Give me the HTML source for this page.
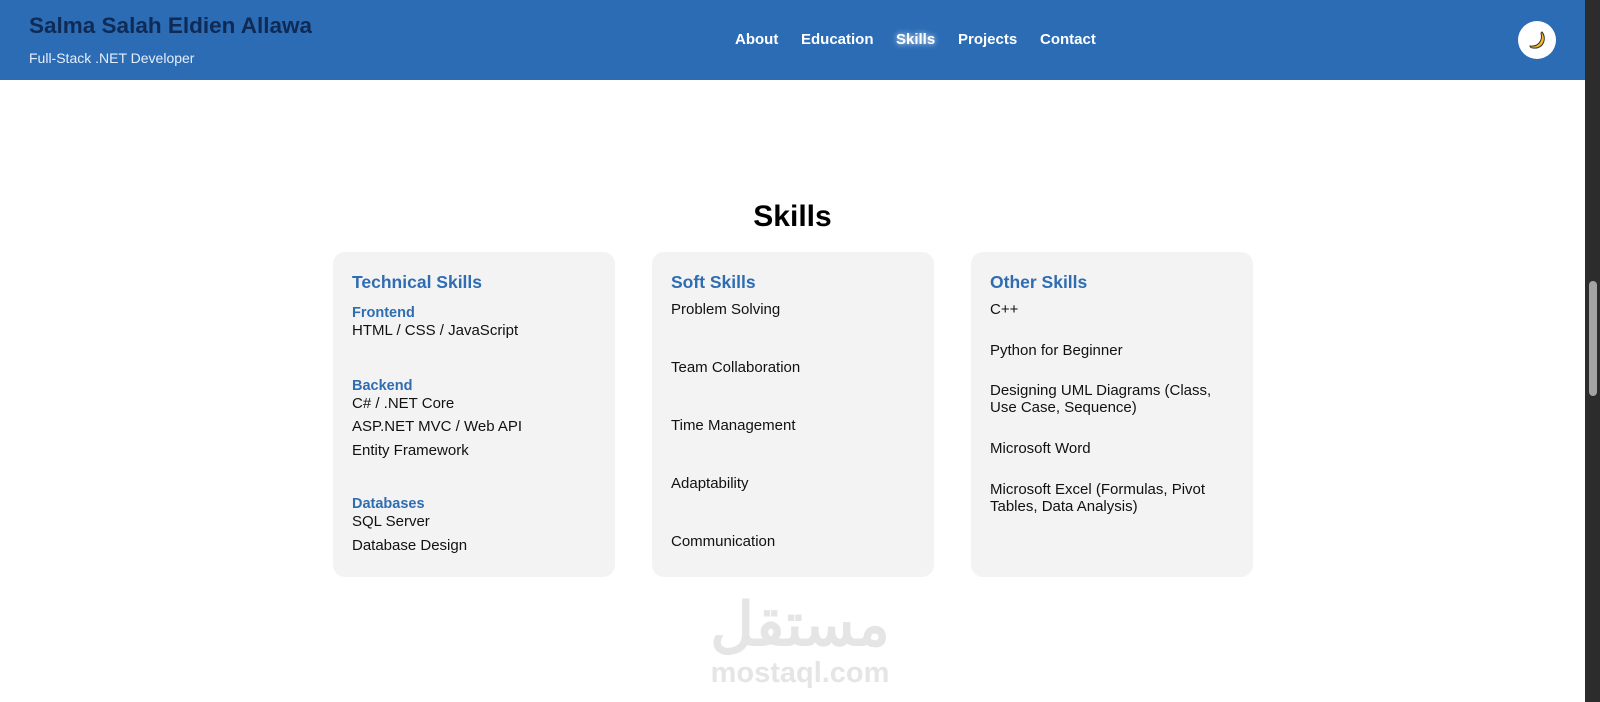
<!DOCTYPE html>
<html><head><meta charset="utf-8"><style>
*{margin:0;padding:0;box-sizing:border-box}
body{width:1600px;height:702px;overflow:hidden;background:#fff;font-family:"Liberation Sans",Arial,sans-serif;position:relative}
.hdr{position:absolute;left:0;top:0;width:1585px;height:80px;background:#2b6cb5}
.abs{position:absolute;white-space:nowrap}
.name{left:29px;top:13px;font-size:22.5px;font-weight:bold;color:#0f2a55}
.sub{left:29px;top:50px;font-size:14px;color:#e6eefa}
.nav{top:31px;font-size:15px;font-weight:bold;color:#fff}
.moon{left:1518px;top:21px;width:38px;height:38px;border-radius:50%;background:#fff}
.card{position:absolute;top:252px;width:282px;height:325px;background:#f3f3f3;border-radius:12px}
.t{font-size:17.5px;font-weight:bold;color:#2f6db3}
.h{font-size:14.5px;font-weight:bold;color:#2f6db3}
.i{font-size:15px;color:#111;line-height:17px}
.sb{position:absolute;left:1585px;top:0;width:15px;height:702px;background:#2c2c2c}
.th{position:absolute;left:1589px;top:281px;width:8px;height:115px;border-radius:4px;background:#a3a3a3}
</style></head><body>
<div class="hdr"></div>
<div class="abs name">Salma Salah Eldien Allawa</div>
<div class="abs sub">Full-Stack .NET Developer</div>
<div class="abs nav" style="left:735px">About</div>
<div class="abs nav" style="left:801px">Education</div>
<div class="abs nav" style="left:896px;text-shadow:0 0 6px rgba(255,255,255,.9)">Skills</div>
<div class="abs nav" style="left:958px">Projects</div>
<div class="abs nav" style="left:1040px">Contact</div>
<div class="abs moon"><svg width="38" height="38" viewBox="0 0 38 38"><path d="M24 11 C29 17 26 28 15 27 C13 27 12 26 12 25 C20 26 25 20 23 12 Z" fill="#f4b92d" stroke="#333" stroke-width="1"/></svg></div>
<div class="abs" style="left:0;width:1585px;text-align:center;top:200px;font-size:30px;font-weight:bold;color:#000">Skills</div>

<div class="card" style="left:333px"></div>
<div class="card" style="left:652px"></div>
<div class="card" style="left:971px"></div>

<div class="abs t" style="left:352px;top:272px">Technical Skills</div>
<div class="abs h" style="left:352px;top:305px">Frontend</div>
<div class="abs i" style="left:352px;top:322px">HTML / CSS / JavaScript</div>
<div class="abs h" style="left:352px;top:378px">Backend</div>
<div class="abs i" style="left:352px;top:395px">C# / .NET Core</div>
<div class="abs i" style="left:352px;top:418px">ASP.NET MVC / Web API</div>
<div class="abs i" style="left:352px;top:442px">Entity Framework</div>
<div class="abs h" style="left:352px;top:496px">Databases</div>
<div class="abs i" style="left:352px;top:513px">SQL Server</div>
<div class="abs i" style="left:352px;top:537px">Database Design</div>

<div class="abs t" style="left:671px;top:272px">Soft Skills</div>
<div class="abs i" style="left:671px;top:301px">Problem Solving</div>
<div class="abs i" style="left:671px;top:359px">Team Collaboration</div>
<div class="abs i" style="left:671px;top:417px">Time Management</div>
<div class="abs i" style="left:671px;top:475px">Adaptability</div>
<div class="abs i" style="left:671px;top:533px">Communication</div>

<div class="abs t" style="left:990px;top:272px">Other Skills</div>
<div class="abs i" style="left:990px;top:301px">C++</div>
<div class="abs i" style="left:990px;top:342px">Python for Beginner</div>
<div class="abs i" style="left:990px;top:382px">Designing UML Diagrams (Class,<br>Use Case, Sequence)</div>
<div class="abs i" style="left:990px;top:440px">Microsoft Word</div>
<div class="abs i" style="left:990px;top:481px">Microsoft Excel (Formulas, Pivot<br>Tables, Data Analysis)</div>

<div class="abs" style="left:680px;width:240px;text-align:center;top:592px;font-family:'Liberation Sans','Noto Sans CJK SC',sans-serif;font-size:60px;font-weight:bold;color:#e5e5e5;line-height:66px">مستقل</div>
<div class="abs" style="left:680px;width:240px;text-align:center;top:657px;font-size:29px;font-weight:bold;color:#e5e5e5">mostaql.com</div>

<div class="sb"></div><div class="th"></div>
</body></html>
